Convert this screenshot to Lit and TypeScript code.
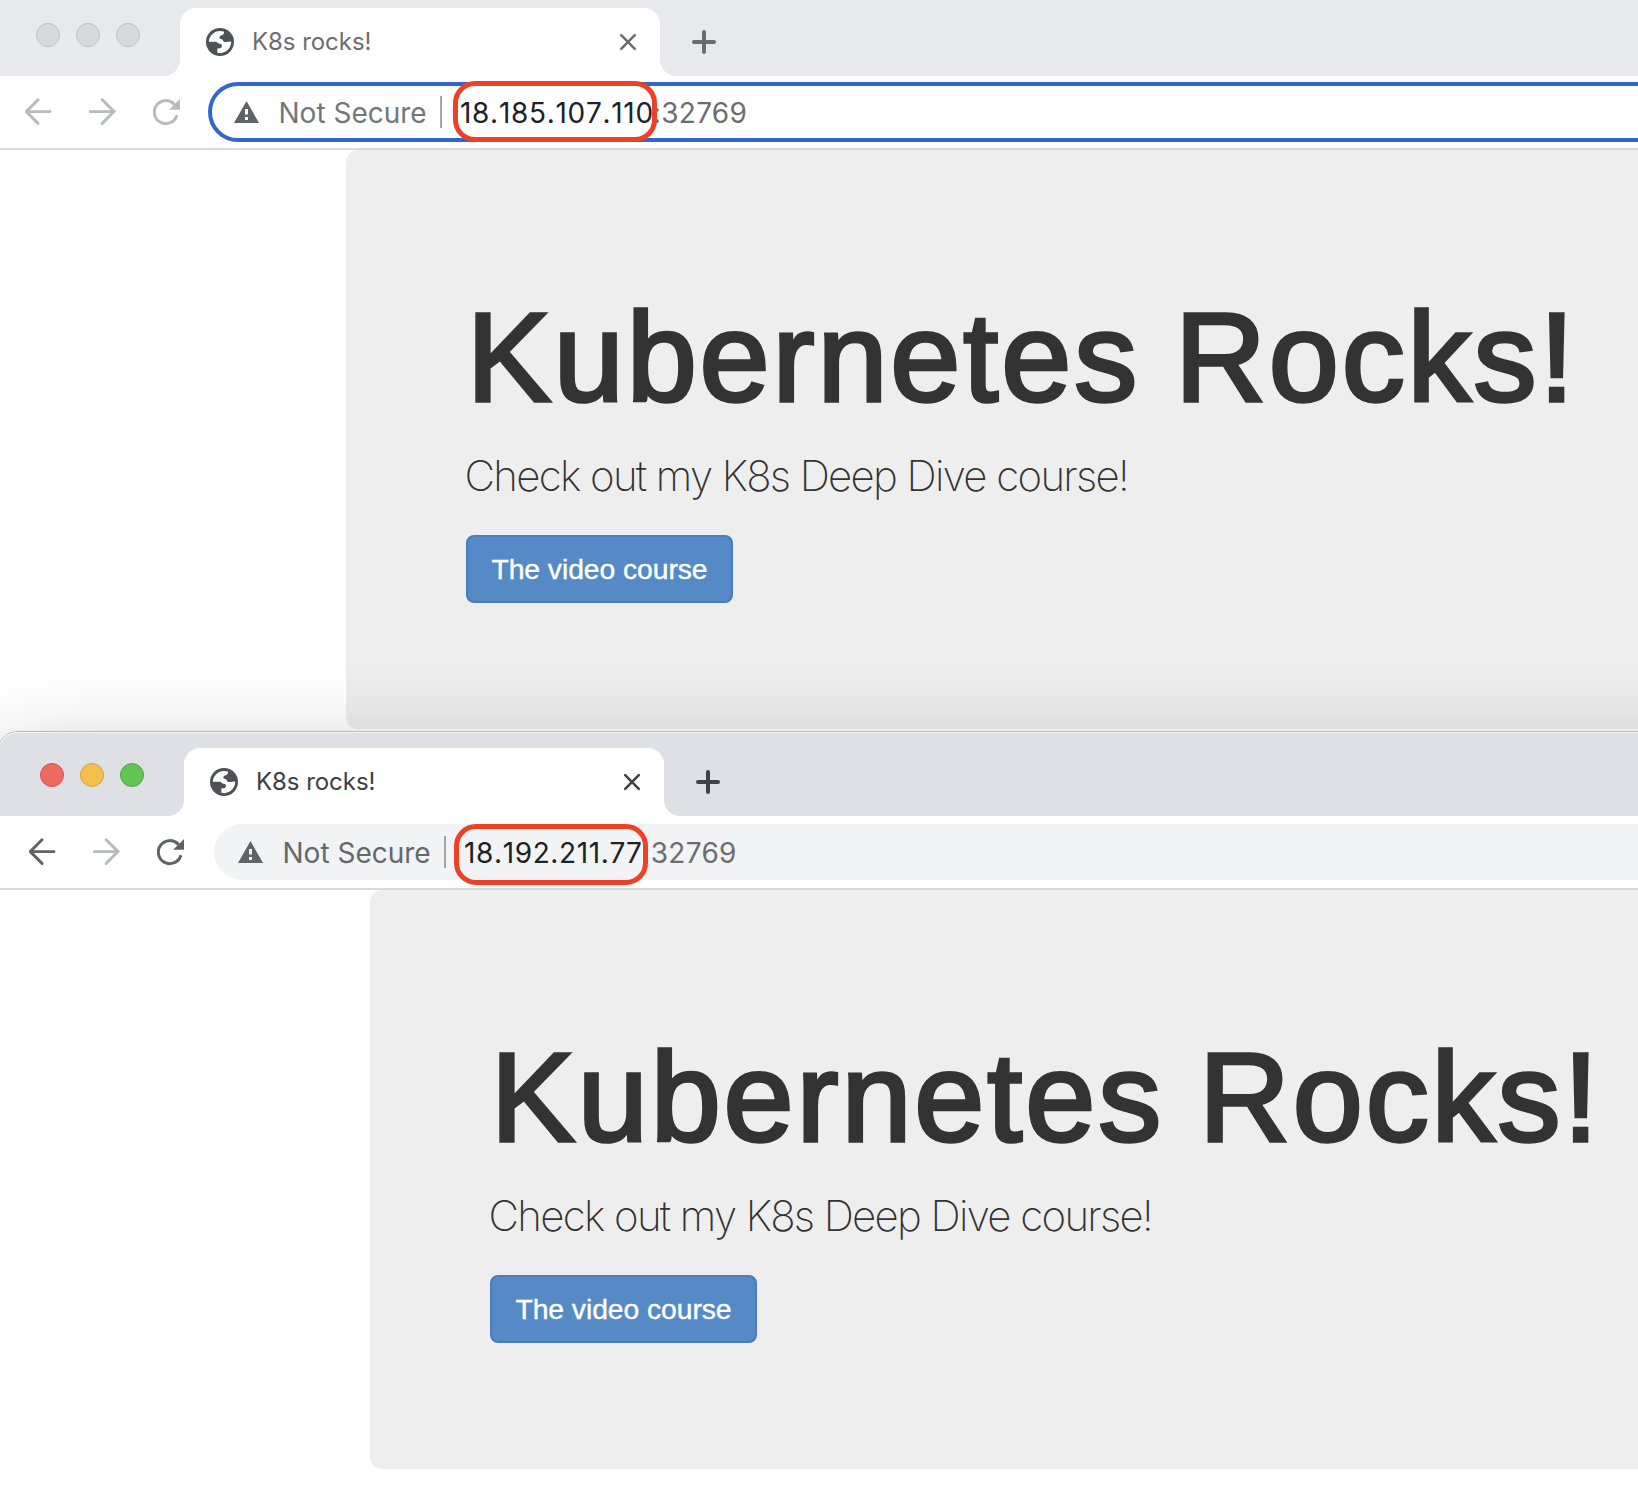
import { LitElement, html, css } from "lit";
import { customElement, property } from "lit/decorators.js";

const backIcon = html`<svg class="arrow" width="28" height="28" viewBox="0 0 28 28" fill="none" stroke="currentColor" stroke-width="2.9">
  <path d="M1.6 13.6H25M13 1.8L1.2 13.6L13 25.4" stroke-linecap="round" /></svg>`;

const forwardIcon = html`<svg class="arrow" width="28" height="28" viewBox="0 0 28 28" fill="none" stroke="currentColor" stroke-width="2.9">
  <path d="M24.6 13.6H1.2M13.2 1.8L25 13.6L13.2 25.4" stroke-linecap="round" /></svg>`;

const reloadIcon = html`<svg width="27" height="27" viewBox="0 0 27 27">
  <path d="M20.9 4.9A11.5 11.5 0 1 0 23.5 17.4" fill="none" stroke="currentColor" stroke-width="3" stroke-linecap="round" />
  <path d="M27 0V10.8H16.2Z" fill="currentColor" /></svg>`;

const globeIcon = html`<svg width="28" height="28" viewBox="0 0 28 28">
  <circle cx="14" cy="14" r="14" fill="#4f5157" />
  <path fill="#fff" d="M2.8 13.8C3 8 8 3 14 3L18 3.6C18.3 6 17 7.3 15 7.6C13.6 8 13.3 9 13.6 10.5C14.5 11 16.3 11 16.8 12.3C17.3 14 18.3 14 20 14L25.2 13.6C25.3 19.5 20.5 25.3 14 25.2L11.3 24.8V20.5L14 20.3C15.3 20 16 19 16 17.5C15.6 15.8 14 15.8 12.6 15.6L10.3 13.8Z" /></svg>`;

const closeIcon = html`<svg width="18" height="18" viewBox="0 0 18 18" fill="none" stroke="currentColor" stroke-width="2.6" stroke-linecap="round">
  <path d="M2.2 2.2L15.8 15.8M15.8 2.2L2.2 15.8" /></svg>`;

const plusIcon = html`<svg width="24" height="24" viewBox="0 0 24 24" fill="none" stroke="currentColor" stroke-width="4" stroke-linecap="round">
  <path d="M2 12H22M12 2V22" /></svg>`;

const warningIcon = html`<svg width="25" height="22" viewBox="0 0 25 22">
  <path fill="#5f6368" fill-rule="evenodd" d="M12.5 0L25 22H0ZM11 8V13.6H14V8ZM11 16V19H14V16Z" /></svg>`;

@customElement("browser-window")
export class BrowserWindow extends LitElement {
  @property() host = "";
  @property() port = "";
  @property({ type: Boolean, reflect: true }) active = false;

  static styles = css`
    :host {
      display: block;
      box-sizing: border-box;
      width: 1900px;
      background: #fff;
      --strip: #e8e9ed;
      --tab-text: #6c6d70;
      --tab-icon: #6b6c6f;
      --nav: #b9babb;
      color: #333;
      font-family: Inter, "Liberation Sans", sans-serif;
    }
    :host([active]) {
      --strip: #dee0e5;
      --tab-text: #3c4043;
      --tab-icon: #3f4246;
      --nav: #5f6368;
    }
    svg { display: block; flex: none; }
    .strip {
      display: flex;
      align-items: flex-end;
      height: 76px;
      box-sizing: border-box;
      padding-left: 36px;
      background: var(--strip);
    }
    :host([active]) .strip {
      height: 84px;
      padding-left: 42px;
      border-top-left-radius: 20px;
      box-shadow: inset 0 1px 0 rgba(255, 255, 255, 0.75);
    }
    .lights { display: flex; gap: 16px; margin: 0 40px 29px 0; }
    .light {
      box-sizing: border-box;
      width: 24px;
      height: 24px;
      border-radius: 50%;
      border: 1px solid #bfc0c2;
      background: #d9dadc;
    }
    :host([active]) .red { background: #ed6a5e; border-color: #d65548; }
    :host([active]) .amber { background: #f5bf4f; border-color: #d8a140; }
    :host([active]) .green { background: #61c554; border-color: #51a73e; }
    .tab {
      position: relative;
      display: flex;
      align-items: center;
      box-sizing: border-box;
      width: 480px;
      height: 68px;
      padding: 0 23px 0 26px;
      border-radius: 16px 16px 0 0;
      background: #fff;
    }
    .tab::before, .tab::after {
      content: "";
      position: absolute;
      bottom: 0;
      width: 16px;
      height: 16px;
    }
    .tab::before { right: 100%; background: radial-gradient(circle at 0 0, transparent 15.5px, #fff 16.2px); }
    .tab::after { left: 100%; background: radial-gradient(circle at 100% 0, transparent 15.5px, #fff 16.2px); }
    .title {
      flex: 1;
      margin-left: 18px;
      font-size: 24px;
      line-height: 30px;
      letter-spacing: -0.05px;
      color: var(--tab-text);
    }
    .close, .new-tab { color: var(--tab-icon); }
    .new-tab { margin: 0 0 22px 32px; }
    .toolbar {
      display: flex;
      align-items: center;
      height: 72px;
      padding-left: 25px;
      border-bottom: 2px solid #dadadb;
      color: var(--nav);
    }
    :host([active]) .toolbar { padding-left: 31px; }
    .arrow { margin: 0 36px 0 0; }
    .next { color: #b9babb; }
    .omnibox {
      position: relative;
      display: flex;
      align-items: center;
      box-sizing: border-box;
      flex: 1;
      height: 60px;
      margin: 0 0 0 28px;
      padding-left: 22px;
      border: 4px solid #3166cc;
      border-radius: 30px;
      font-size: 28px;
      line-height: 34px;
      color: #72777b;
    }
    :host([active]) .omnibox {
      height: 56px;
      margin-left: 30px;
      padding-left: 24px;
      border: 0;
      background: #f1f3f4;
      color: #64686c;
    }
    .state { width: 161px; margin-left: 19.5px; white-space: nowrap; }
    .state, .address, .port { padding-top: 1px; }
    .divider { width: 2px; height: 32px; background: #a3a5a8; }
    .address { margin-left: 18.5px; color: #202124; font-kerning: none; letter-spacing: 0.7px; white-space: nowrap; }
    .address.short { letter-spacing: 0.62px; }
    .port { color: #6c6d70; letter-spacing: 0.3px; }
    .address:not(.short) + .port { margin-left: -1px; }
    .marker {
      position: absolute;
      box-sizing: border-box;
      left: 241px;
      top: -5px;
      width: 204px;
      height: 61px;
      border: 5.5px solid #ec4126;
      border-radius: 22px;
    }
    .marker.short { left: 239.5px; top: 0; width: 194.5px; }
    .page { height: 581px; overflow: hidden; padding-left: 346px; }
    :host([active]) .page { height: 600px; padding-left: 372px; }
    .jumbotron {
      box-sizing: border-box;
      height: 579px;
      padding: 138.5px 0 0 120px;
      border-radius: 12px;
      background: #eee;
    }
    h1 {
      margin: 0 0 20.2px 0.75px;
      font: 400 126px/138.6px "Liberation Sans", sans-serif;
      letter-spacing: 2.88px;
      word-spacing: -3px;
      -webkit-text-stroke: 3.5px #333;
      white-space: nowrap;
    }
    p {
      margin: 0 0 29px -1.5px;
      font-size: 42px;
      font-weight: 200;
      line-height: 58.8px;
      letter-spacing: -1.7px;
      word-spacing: 0.3px;
    }
    .button {
      display: flex;
      align-items: center;
      justify-content: center;
      box-sizing: border-box;
      width: 267px;
      height: 68px;
      border: 2px solid #4a7dbd;
      border-radius: 8px;
      background: #558ac6;
      color: #fff;
      font: 28.3px/38px "Liberation Sans", sans-serif;
      letter-spacing: -0.06px;
      -webkit-text-stroke: 0.4px #fff;
    }
  `;

  render() {
    const short = this.host.length < 14 ? "short" : "";
    return html`
      <div class="strip">
        <div class="lights"><i class="light red"></i><i class="light amber"></i><i class="light green"></i></div>
        <div class="tab">
          ${globeIcon}<span class="title">K8s rocks!</span><span class="close">${closeIcon}</span>
        </div>
        <span class="new-tab">${plusIcon}</span>
      </div>
      <div class="toolbar">
        <span>${backIcon}</span><span class="next">${forwardIcon}</span>${reloadIcon}
        <div class="omnibox">
          ${warningIcon}<span class="state">Not Secure</span><i class="divider"></i>
          <span class="address ${short}">${this.host}</span><span class="port">:${this.port}</span>
          <i class="marker ${short}"></i>
        </div>
      </div>
      <div class="page">
        <div class="jumbotron">
          <h1>Kubernetes Rocks!</h1>
          <p>Check out my K8s Deep Dive course!</p>
          <div class="button">The video course</div>
        </div>
      </div>
    `;
  }
}

@customElement("app-root")
export class AppRoot extends LitElement {
  static styles = css`
    :host {
      display: flex;
      flex-direction: column;
      width: 100%;
      height: 1490px;
      overflow: hidden;
      background: #fff;
    }
    browser-window { flex: none; }
    .back { height: 731px; overflow: hidden; }
    .front {
      position: relative;
      margin: 1px 0 0 -2px;
      height: 758px;
      border-top-left-radius: 20px;
      box-shadow: 0 0 0 1px #b6b8b8, 0 36px 100px rgba(0, 0, 0, 0.32);
    }
  `;

  render() {
    return html`
      <browser-window class="back" host="18.185.107.110" port="32769"></browser-window>
      <browser-window class="front" active host="18.192.211.77" port="32769"></browser-window>
    `;
  }
}
